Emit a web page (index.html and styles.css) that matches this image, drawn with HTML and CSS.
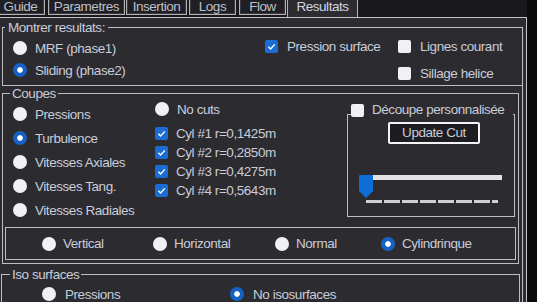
FILE: index.html
```html
<!DOCTYPE html>
<html lang="fr">
<head>
	<meta charset="UTF-8">
	<title>Resultats</title>
	<link rel="stylesheet" href="styles.css">
</head>
<body>
<div class="win">
	<div class="tabs">
		<div class="tab t-guide">Guide</div>
		<div class="tab t-param">Parametres</div>
		<div class="tab t-ins">Insertion</div>
		<div class="tab t-logs">Logs</div>
		<div class="tab t-flow">Flow</div>
		<div class="tab on t-res">Resultats</div>
	</div>
	<div class="page">
		<fieldset class="grp show">
			<legend>Montrer resultats:</legend>
			<div class="show-body">
				<div class="rcol">
					<div class="opt"><span class="rb"></span>MRF (phase1)</div>
					<div class="opt"><span class="rb on"></span>Sliding (phase2)</div>
				</div>
				<div class="ccol">
					<div class="opt"><span class="cb on"><svg viewBox="0 0 13 13"><polyline points="3.4,6.8 5.6,9 9.8,4.4"/></svg></span>Pression surface</div>
				</div>
				<div class="ccol">
					<div class="opt"><span class="cb"></span>Lignes courant</div>
					<div class="opt"><span class="cb"></span>Sillage helice</div>
				</div>
			</div>
		</fieldset>

		<fieldset class="grp cuts">
			<legend>Coupes</legend>
			<div class="cuts-top">
				<div class="field-col">
					<div class="opt"><span class="rb"></span>Pressions</div>
					<div class="opt"><span class="rb on"></span>Turbulence</div>
					<div class="opt"><span class="rb"></span>Vitesses Axiales</div>
					<div class="opt"><span class="rb"></span>Vitesses Tang.</div>
					<div class="opt"><span class="rb"></span>Vitesses Radiales</div>
				</div>
				<div class="cyl-col">
					<div class="opt nocut"><span class="rb"></span>No cuts</div>
					<div class="cyls">
						<div class="opt"><span class="cb on"><svg viewBox="0 0 13 13"><polyline points="3.4,6.8 5.6,9 9.8,4.4"/></svg></span>Cyl #1 r=0,1425m</div>
						<div class="opt"><span class="cb on"><svg viewBox="0 0 13 13"><polyline points="3.4,6.8 5.6,9 9.8,4.4"/></svg></span>Cyl #2 r=0,2850m</div>
						<div class="opt"><span class="cb on"><svg viewBox="0 0 13 13"><polyline points="3.4,6.8 5.6,9 9.8,4.4"/></svg></span>Cyl #3 r=0,4275m</div>
						<div class="opt"><span class="cb on"><svg viewBox="0 0 13 13"><polyline points="3.4,6.8 5.6,9 9.8,4.4"/></svg></span>Cyl #4 r=0,5643m</div>
					</div>
				</div>
				<fieldset class="grp custom">
					<legend><span class="cb"></span>Découpe personnalisée</legend>
					<div class="btn">Update Cut</div>
					<div class="slider">
						<div class="track"></div>
						<svg class="thumb" viewBox="0 0 14 23"><path d="M1 0H13Q14 0 14 1V16L7 23L0 16V1Q0 0 1 0Z"/></svg>
					</div>
					<div class="ticks"></div>
				</fieldset>
			</div>
			<div class="orient">
				<div class="opt"><span class="rb"></span>Vertical</div>
				<div class="opt"><span class="rb"></span>Horizontal</div>
				<div class="opt"><span class="rb"></span>Normal</div>
				<div class="opt"><span class="rb on"></span>Cylindrinque</div>
			</div>
		</fieldset>

		<fieldset class="grp iso">
			<legend>Iso surfaces</legend>
			<div class="iso-body">
				<div class="opt"><span class="rb"></span>Pressions</div>
				<div class="opt"><span class="rb on"></span>No isosurfaces</div>
			</div>
		</fieldset>
	</div>
</div>
</body>
</html>
```

FILE: styles.css
```css
*{
	box-sizing: border-box;
}
body{
	margin: 0;
	background: #0b0b0c;
	font-family: "Liberation Sans", Arial, sans-serif;
	font-size: 13.5px;
	letter-spacing: -0.45px;
	color: #c8cdda;
}
.win{
	width: 537px;
	height: 302px;
	overflow: hidden;
}

/* tab strip */
.tabs{
	display: flex;
	align-items: flex-start;
	width: 527px;
	height: 17px;
	background: #19181c;
}
.tab{
	height: 18px;
	margin-top: -3px;
	padding-top: 2px;
	line-height: 14px;
	text-align: center;
	border: 1px solid #b1b1b6;
	box-shadow: inset 0 0 0 1px #3a393e;
	background: #201f23;
	color: #bcc0cb;
}
.t-guide{ width: 49px; margin-left: -4px; }
.t-param{ width: 77px; margin-left: 3px; }
.t-ins{ width: 61px; margin-left: 1px; }
.t-logs{ width: 47px; margin-left: 2px; }
.t-flow{ width: 47px; margin-left: 3px; }
.t-res{ width: 71px; margin-left: 1px; }
.tab.on{
	height: 20px;
	border-bottom: none;
	box-shadow: none;
	background: #2c2b30;
	color: #d3d7e2;
}

/* page */
.page{
	width: 527px;
	height: 285px;
	padding-top: 2px;
	border-top: 1px solid #c2c2c7;
	border-right: 1px solid #c2c2c7;
	background: linear-gradient(#bdbdc2, #bdbdc2) 522px 9px / 1px 100% no-repeat, #2c2b30;
}
.grp{
	margin: 0;
	padding: 0;
	min-width: 0;
	border: 1px solid #bdbdc2;
}
legend{
	padding: 0 2px;
	line-height: 15px;
}

/* controls */
.opt{
	display: flex;
	align-items: center;
	white-space: nowrap;
}
.rb{
	flex: none;
	width: 14px;
	height: 14px;
	margin-right: 8px;
	border-radius: 50%;
	background: #f1f1f3;
}
.rb.on{
	background: radial-gradient(circle, #fff 0 2.4px, #1463c4 3.2px);
}
.cb{
	flex: none;
	display: block;
	width: 13px;
	height: 13px;
	margin-right: 8px;
	border-radius: 2px;
	background: #f1f1f3;
}
.cb.on{
	background: #1b6dd3;
}
.cb svg{
	display: block;
	width: 13px;
	height: 13px;
	fill: none;
	stroke: #fff;
	stroke-width: 1.4;
}

/* Montrer resultats */
.show{
	width: 521px;
	margin-left: 2px;
}
.show legend{
	margin-left: 2px;
	padding: 0 3px;
}
.show-body{
	display: grid;
	grid-template-columns: 252px 133px auto;
	padding: 2px 0 2px 10px;
}
.rcol .opt{
	height: 22px;
}
.ccol{
	display: flex;
	flex-direction: column;
	gap: 8px;
}
.ccol .opt{
	height: 19px;
}
.ccol .cb{
	margin-right: 9px;
}

/* Coupes */
.cuts{
	width: 517px;
	margin-left: 2px;
	padding-bottom: 3px;
}
.cuts legend{
	margin-left: 7px;
}
.cuts-top{
	display: flex;
	align-items: flex-start;
	height: 116px;
	padding-top: 1px;
	padding-left: 10px;
}
.field-col{
	width: 142px;
}
.field-col .opt{
	height: 24px;
}
.cyl-col{
	width: 192px;
}
.nocut{
	height: 14px;
}
.cyls{
	margin-top: 8px;
}
.cyls .opt{
	height: 19px;
}
.cyls .cb{
	margin-right: 8px;
}

/* Découpe personnalisée */
.custom{
	width: 168px;
	height: 114px;
	margin-top: 1px;
}
.custom legend{
	display: flex;
	align-items: center;
	width: 162px;
	height: 23px;
	margin-left: 3px;
	padding: 0 0 9px;
	line-height: 14px;
}
.btn{
	width: 92px;
	height: 22px;
	margin: -4px 0 0 40px;
	border: 2px solid #f4f4f6;
	border-radius: 2px;
	background: #1d1c20;
	line-height: 18px;
	text-align: center;
}
.slider{
	position: relative;
	width: 140px;
	height: 23px;
	margin: 31px 0 0 14px;
}
.track{
	height: 5px;
	margin-top: 7px;
	background: #e3e3e6;
}
.thumb{
	position: absolute;
	left: -3px;
	top: 0;
	width: 14px;
	height: 23px;
	fill: #0f6ed6;
}
.ticks{
	width: 132px;
	height: 3px;
	margin: 2px 0 0 18px;
	background: repeating-linear-gradient(to right, #cfcfd3 0 16px, transparent 16px 18px);
}

/* orientation */
.orient{
	display: grid;
	grid-template-columns: 111px 122px 106px auto;
	align-items: center;
	width: 511px;
	height: 33px;
	margin: 10px 0 0 2px;
	padding-left: 36px;
	border: 1px solid #bdbdc2;
}
.orient .rb{
	margin-right: 7px;
}

/* Iso surfaces */
.iso{
	width: 519px;
	height: 60px;
	margin: 3px 0 0 1px;
}
.iso legend{
	margin-left: 8px;
}
.iso-body{
	display: grid;
	grid-template-columns: 188px auto;
	padding-left: 40px;
}
.iso-body .opt{
	height: 24px;
}
.iso-body .rb{
	margin-right: 9px;
}
```
